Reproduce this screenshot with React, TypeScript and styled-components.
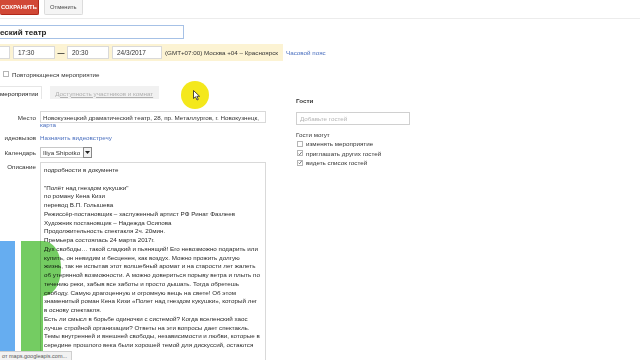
import React from "react";
import styled, { createGlobalStyle } from "styled-components";

const GlobalStyle = createGlobalStyle`
  html, body {
    margin: 0;
    padding: 0;
    background: #fff;
  }
  body {
    font-family: "Liberation Sans", Arial, sans-serif;
    color: #222;
  }
`;

const Screen = styled.div`
  position: relative;
  width: 640px;
  height: 360px;
  overflow: hidden;
  background: #fff;
  font-size: 6.25px;
`;

const Toolbar = styled.div`
  display: flex;
  align-items: flex-start;
  gap: 5px;
  height: 15px;
  padding-bottom: 3px;
  border-bottom: 1px solid #ececec;
`;

const Button = styled.div<{ $primary?: boolean }>`
  height: 15px;
  box-sizing: border-box;
  display: flex;
  align-items: center;
  padding: 0 5px;
  border-radius: 0 0 2px 2px;
  font-size: 5.8px;
  font-weight: ${(p) => (p.$primary ? "bold" : "normal")};
  color: ${(p) => (p.$primary ? "#fff" : "#444")};
  background: ${(p) => (p.$primary ? "#d14836" : "#f5f5f5")};
  border: 1px solid ${(p) => (p.$primary ? "#b0281a" : "#dcdcdc")};
  border-top: none;
`;

const SaveButton = styled(Button)`
  width: 39px;
  padding-left: 1px;
  border-left: none;
`;

const TitleInput = styled.div`
  margin-top: 6px;
  width: 184px;
  height: 14px;
  box-sizing: border-box;
  border: 1px solid #a6c1e6;
  border-left: none;
  display: flex;
  align-items: center;
  font-size: 8px;
  font-weight: bold;
  color: #222;
`;

const DateLine = styled.div`
  margin-top: 5px;
  display: flex;
  align-items: center;
`;

const DateBand = styled.div`
  width: 283px;
  height: 17px;
  background: #fcf3d3;
  display: flex;
  align-items: center;
`;

const DateInput = styled.div<{ $w: number; $cut?: boolean }>`
  width: ${(p) => p.$w}px;
  height: 13px;
  box-sizing: border-box;
  background: #fff;
  border: 1px solid #d9d9d9;
  border-left: ${(p) => (p.$cut ? "none" : "1px solid #d9d9d9")};
  display: flex;
  align-items: center;
  padding-left: 4px;
  font-size: 6.5px;
  color: #333;
`;

const Gap = styled.div<{ $w: number }>`
  width: ${(p) => p.$w}px;
  flex-shrink: 0;
`;

const Dash = styled.div`
  width: 12px;
  text-align: center;
  font-weight: bold;
  font-size: 7px;
`;

const Zone = styled.div`
  margin-left: 3px;
  color: #333;
  white-space: nowrap;
`;

const Link = styled.span<{ $under?: boolean }>`
  color: #4a6fbf;
  text-decoration: ${(p) => (p.$under ? "underline" : "none")};
  white-space: nowrap;
`;

const TzLink = styled(Link)`
  margin-left: 3px;
`;

const RepeatRow = styled.div`
  margin-top: 9px;
  margin-left: 3px;
  height: 8px;
  display: flex;
  align-items: center;
  gap: 3px;
  color: #333;
`;

const Box = styled.span`
  width: 6px;
  height: 6px;
  box-sizing: border-box;
  border: 1px solid #b5b5b5;
  background: #fff;
  display: inline-flex;
  align-items: center;
  justify-content: center;
  flex-shrink: 0;
`;

const Tabs = styled.div`
  margin-top: 8px;
  display: flex;
  align-items: stretch;
  height: 13px;
  gap: 8px;
`;

const Tab = styled.div<{ $active?: boolean }>`
  display: flex;
  align-items: center;
  box-sizing: border-box;
  padding: ${(p) => (p.$active ? "0 3px 0 0" : "0 5px")};
  background: ${(p) => (p.$active ? "#fff" : "#f1f1f1")};
  border: 1px solid ${(p) => (p.$active ? "#e6e6e6" : "#f1f1f1")};
  border-left: none;
  border-bottom: none;
  color: ${(p) => (p.$active ? "#222" : "#b0b0b0")};
  text-decoration: ${(p) => (p.$active ? "none" : "underline")};
  white-space: nowrap;
`;

const Body = styled.div`
  display: flex;
`;

const FormCol = styled.div`
  width: 296px;
  padding-top: 12px;
`;

const Field = styled.div<{ $mt?: number; $top?: boolean }>`
  display: grid;
  grid-template-columns: 36px 1fr;
  column-gap: 4px;
  align-items: ${(p) => (p.$top ? "start" : "center")};
  margin-top: ${(p) => p.$mt ?? 0}px;
`;

const Label = styled.div<{ $pt?: number }>`
  text-align: right;
  white-space: nowrap;
  color: #333;
  padding-top: ${(p) => p.$pt ?? 0}px;
`;

const TextBox = styled.div`
  width: 226px;
  height: 12px;
  box-sizing: border-box;
  border: 1px solid #d9d9d9;
  display: flex;
  align-items: center;
  padding-left: 2px;
  color: #333;
  white-space: nowrap;
  overflow: hidden;
`;

const MapLink = styled.div`
  margin-left: 40px;
  margin-top: -2px;
  line-height: 8px;
`;

const Select = styled.div`
  display: flex;
  height: 11px;
  width: 52px;
`;

const SelectValue = styled.div`
  flex: 1;
  box-sizing: border-box;
  border: 1px solid #c8c8c8;
  border-right: none;
  display: flex;
  align-items: center;
  padding-left: 2px;
  white-space: nowrap;
  overflow: hidden;
  color: #333;
`;

const SelectArrow = styled.div`
  width: 9px;
  box-sizing: border-box;
  border: 1px solid #888;
  background: #f3f3f3;
  display: flex;
  align-items: center;
  justify-content: center;
`;

const TextArea = styled.div`
  width: 226px;
  height: 220px;
  box-sizing: border-box;
  border: 1px solid #d9d9d9;
  border-bottom: none;
  padding: 3px 0 0 3px;
  line-height: 8.75px;
  color: #2a2a2a;
`;

const Line = styled.div`
  white-space: pre;
  height: 8.75px;
`;

const GuestCol = styled.div`
  width: 120px;
`;

const GuestTitle = styled.div`
  font-weight: bold;
  color: #333;
  line-height: 8px;
  margin-top: -2px;
`;

const GuestInput = styled.div`
  margin-top: 7px;
  width: 114px;
  height: 13px;
  box-sizing: border-box;
  border: 1px solid #d0d0d0;
  display: flex;
  align-items: center;
  padding-left: 3px;
  color: #b5b5b5;
`;

const CanTitle = styled.div`
  margin-top: 6px;
  line-height: 8px;
  color: #333;
`;

const CheckRow = styled.div`
  height: 9.5px;
  display: flex;
  align-items: center;
  gap: 3px;
  padding-left: 1px;
  color: #333;
`;

const ClickMark = styled.div`
  position: absolute;
  left: 181px;
  top: 81px;
  width: 28px;
  height: 28px;
  border-radius: 50%;
  background: #f4e81c;
`;

const Cursor = styled.svg`
  position: absolute;
  left: 193px;
  top: 90px;
`;

const BlueBar = styled.div`
  position: absolute;
  left: 0;
  top: 241px;
  width: 15px;
  height: 111px;
  background: #66adf0;
  mix-blend-mode: multiply;
`;

const GreenMark = styled.svg`
  position: absolute;
  left: 21px;
  top: 241px;
  mix-blend-mode: multiply;
`;

const StatusBar = styled.div`
  position: absolute;
  left: 0;
  bottom: 0;
  height: 8px;
  padding: 0 4px 0 2px;
  background: #f2f2f2;
  border-top: 1px solid #cfcfcf;
  border-right: 1px solid #cfcfcf;
  font-size: 5.5px;
  line-height: 8px;
  color: #555;
  white-space: nowrap;
`;

const Check = ({ on }: { on?: boolean }) => (
  <Box>
    {on && (
      <svg width="5" height="5" viewBox="0 0 10 10">
        <path d="M1.5 5.5 L4 8 L9 1.5" stroke="#444" strokeWidth="1.8" fill="none" />
      </svg>
    )}
  </Box>
);

const description = [
  "подробности в документе",
  "",
  "\"Полёт над гнездом кукушки\"",
  "по роману Кена Кизи",
  "перевод В.П. Голышева",
  "Режиссёр-постановщик – заслуженный артист РФ Ринат Фазлеев",
  "Художник постановщик – Надежда Осипова",
  "Продолжительность спектакля 2ч. 20мин.",
  "Премьера состоялась 24 марта 2017г.",
  "Дух свободы… такой сладкий и пьянящий! Его невозможно подарить или",
  "купить, он невидим и бесценен, как воздух. Можно прожить долгую",
  "жизнь, так не испытав этот волшебный аромат и на старости лет жалеть",
  "об утерянной возможности. А можно довериться порыву ветра и плыть по",
  "течению реки, забыв все заботы и просто дышать. Тогда обретешь",
  "свободу. Самую драгоценную и огромную вещь на свете! Об этом",
  "знаменитый роман Кена Кизи «Полет над гнездом кукушки», который лег",
  "в основу спектакля.",
  "Есть ли смысл в борьбе одиночки с системой? Когда вселенский хаос",
  "лучше стройной организации? Ответы на эти вопросы дает спектакль.",
  "Темы внутренней и внешней свободы, независимости и любви, которые в",
  "середине прошлого века были хорошей темой для дискуссий, остаются",
];

const App = () => {
  return (
    <Screen>
      <GlobalStyle />
      <Toolbar>
        <SaveButton $primary>СОХРАНИТЬ</SaveButton>
        <Button>Отменить</Button>
      </Toolbar>

      <TitleInput>еский театр</TitleInput>

      <DateLine>
        <DateBand>
          <DateInput $w={10} $cut />
          <Gap $w={3} />
          <DateInput $w={42}>17:30</DateInput>
          <Dash>—</Dash>
          <DateInput $w={42}>20:30</DateInput>
          <Gap $w={3} />
          <DateInput $w={50}>24/3/2017</DateInput>
          <Zone>(GMT+07:00) Москва +04 – Красноярск</Zone>
        </DateBand>
        <TzLink>Часовой пояс</TzLink>
      </DateLine>

      <RepeatRow>
        <Check />
        Повторяющееся мероприятие
      </RepeatRow>

      <Tabs>
        <Tab $active>мероприятии</Tab>
        <Tab>Доступность участников и комнат</Tab>
      </Tabs>

      <Body>
        <FormCol>
          <Field>
            <Label>Место</Label>
            <TextBox>Новокузнецкий драматический театр, 28, пр. Металлургов, г. Новокузнецк,</TextBox>
          </Field>
          <MapLink>
            <Link>карта</Link>
          </MapLink>
          <Field $mt={5}>
            <Label>идеовызов</Label>
            <Link>Назначить видеовстречу</Link>
          </Field>
          <Field $mt={6}>
            <Label>Календарь</Label>
            <Select>
              <SelectValue>Iliya Shipotko</SelectValue>
              <SelectArrow>
                <svg width="5" height="3" viewBox="0 0 5 3">
                  <path d="M0 0 H5 L2.5 3 Z" fill="#222" />
                </svg>
              </SelectArrow>
            </Select>
          </Field>
          <Field $mt={4} $top>
            <Label $pt={1}>Описание</Label>
            <TextArea>
              {description.map((l, i) => (
                <Line key={i}>{l}</Line>
              ))}
            </TextArea>
          </Field>
        </FormCol>

        <GuestCol>
          <GuestTitle>Гости</GuestTitle>
          <GuestInput>Добавьте гостей</GuestInput>
          <CanTitle>Гости могут</CanTitle>
          <CheckRow>
            <Check />
            изменять мероприятие
          </CheckRow>
          <CheckRow>
            <Check on />
            приглашать других гостей
          </CheckRow>
          <CheckRow>
            <Check on />
            видеть список гостей
          </CheckRow>
        </GuestCol>
      </Body>

      <ClickMark />
      <Cursor width="8" height="11" viewBox="0 0 8 11">
        <path d="M0.5 0.5 L0.5 8.5 L2.5 6.8 L4 10 L5.3 9.4 L3.9 6.3 L6.6 6.3 Z" fill="#fff" stroke="#222" strokeWidth="0.8" />
      </Cursor>

      <BlueBar />
      <GreenMark width="40" height="119" viewBox="0 0 40 119">
        <path d="M0 0 H22 C33 0 40 12 40 27 C40 44 32 55 22 55 V119 H0 Z" fill="#74cc62" />
      </GreenMark>

      <StatusBar>от maps.googleapis.com...</StatusBar>
    </Screen>
  );
};

export default App;
